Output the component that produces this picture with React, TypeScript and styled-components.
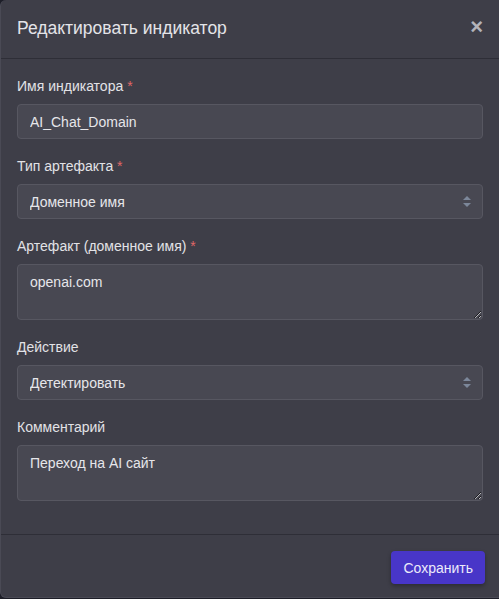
import React from 'react';
import styled, { createGlobalStyle } from 'styled-components';

const GlobalStyle = createGlobalStyle`
  html, body {
    margin: 0;
    padding: 0;
    background: #1d1e28;
    overflow: hidden;
  }
  body {
    font-family: "Liberation Sans", Arial, sans-serif;
    color-scheme: dark;
  }
`;

const Modal = styled.div`
  width: 510px;
  box-sizing: border-box;
  display: flex;
  flex-direction: column;
  background: #3e3e48;
  border: 1px solid #4a4a55;
  border-top: none;
  border-radius: 6px;
`;

const Header = styled.div`
  flex-shrink: 0;
  display: flex;
  align-items: center;
  justify-content: space-between;
  height: 59px;
  box-sizing: border-box;
  padding: 0 26px 1px 16px;
  border-bottom: 1px solid #2e2e37;
`;

const Title = styled.h2`
  margin: 0;
  font-size: 17.5px;
  font-weight: 400;
  color: #e4e4e8;
`;

const Close = styled.button`
  border: none;
  background: none;
  padding: 0;
  margin-top: -4px;
  color: #b3b3ba;
  font-size: 22px;
  font-weight: 700;
  line-height: 1;
  cursor: pointer;
`;

const Body = styled.div`
  flex-shrink: 0;
  padding: 18px 26px 15px 16px;
`;

const Group = styled.div`
  margin-bottom: 18px;
`;

const Label = styled.label`
  display: block;
  font-size: 14px;
  line-height: 19px;
  color: #e2e2e6;
  margin-bottom: 8px;
`;

const Req = styled.span`
  color: #e06767;
`;

const fieldCss = `
  display: block;
  width: 100%;
  box-sizing: border-box;
  background: #484852;
  border: 1px solid #575761;
  border-radius: 4px;
  color: #e6e6ea;
  font-family: "Liberation Sans", Arial, sans-serif;
  font-size: 14px;
  padding: 0 12px;
  outline: none;
`;

const Input = styled.input`
  ${fieldCss}
  height: 35px;
`;

const SelectWrap = styled.div`
  position: relative;
`;

const Select = styled.select`
  ${fieldCss}
  height: 35px;
  appearance: none;
  -webkit-appearance: none;
`;

const Arrows = styled.svg`
  position: absolute;
  right: 12px;
  top: 12px;
  pointer-events: none;
`;

const TextArea = styled.textarea`
  ${fieldCss}
  height: 56px;
  padding: 9px 12px;
  resize: vertical;
  line-height: 17px;
`;

const Footer = styled.div`
  flex-shrink: 0;
  display: flex;
  justify-content: flex-end;
  height: 63px;
  box-sizing: border-box;
  padding: 16px 24px 0 16px;
  border-top: 1px solid #2e2e37;
`;

const SaveButton = styled.button`
  height: 33px;
  padding: 0 12px;
  background: #4836c8;
  color: #ecebfa;
  border: none;
  border-radius: 4px;
  font-family: "Liberation Sans", Arial, sans-serif;
  font-size: 14px;
  box-shadow: 0 2px 4px rgba(0, 0, 0, 0.3);
  cursor: pointer;
`;

const SelectArrows = () => (
  <Arrows width="8" height="11" viewBox="0 0 8 11">
    <path d="M4 0 L8 4 L0 4 Z" fill="#7c879a" />
    <path d="M0 7 L8 7 L4 11 Z" fill="#7c879a" />
  </Arrows>
);

const Field: React.FC<{ label: string; required?: boolean; children: React.ReactNode }> = ({
  label,
  required,
  children,
}) => (
  <Group>
    <Label>
      {label} {required && <Req>*</Req>}
    </Label>
    {children}
  </Group>
);

export default function App() {
  return (
    <>
      <GlobalStyle />
      <Modal>
        <Header>
          <Title>Редактировать индикатор</Title>
          <Close>×</Close>
        </Header>
        <Body>
          <Field label="Имя индикатора" required>
            <Input defaultValue="AI_Chat_Domain" />
          </Field>
          <Field label="Тип артефакта" required>
            <SelectWrap>
              <Select defaultValue="domain">
                <option value="domain">Доменное имя</option>
              </Select>
              <SelectArrows />
            </SelectWrap>
          </Field>
          <Field label="Артефакт (доменное имя)" required>
            <TextArea defaultValue="openai.com" />
          </Field>
          <Field label="Действие">
            <SelectWrap>
              <Select defaultValue="detect">
                <option value="detect">Детектировать</option>
              </Select>
              <SelectArrows />
            </SelectWrap>
          </Field>
          <Field label="Комментарий">
            <TextArea defaultValue="Переход на AI сайт" />
          </Field>
        </Body>
        <Footer>
          <SaveButton>Сохранить</SaveButton>
        </Footer>
      </Modal>
    </>
  );
}
